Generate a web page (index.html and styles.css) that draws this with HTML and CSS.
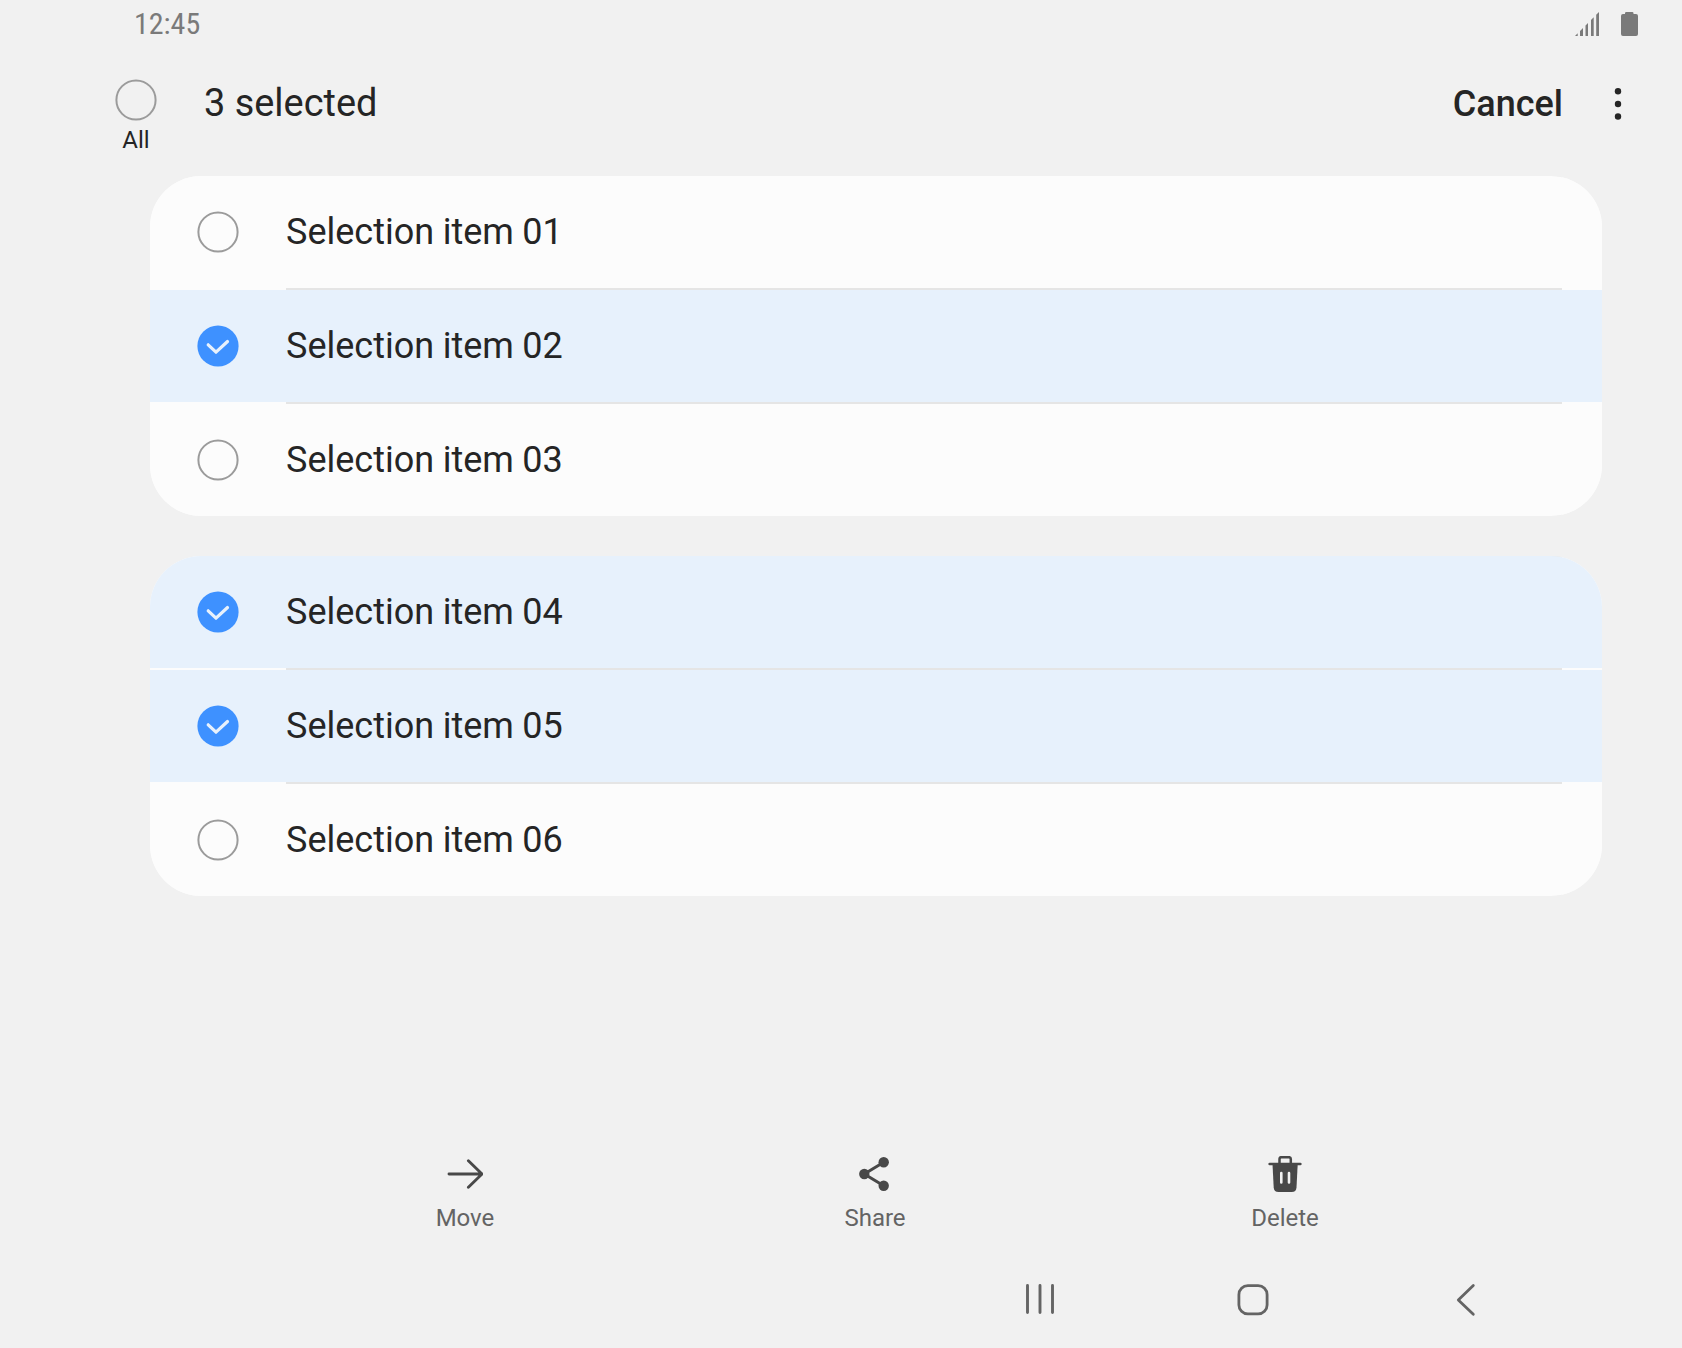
FILE: index.html
```html
<!DOCTYPE html>
<html lang="en">
<head>
<meta charset="utf-8">
<title>Selection</title>
<link rel="stylesheet" href="styles.css">
</head>
<body>
<svg class="defs" width="0" height="0" aria-hidden="true">
  <symbol id="off" viewBox="0 0 42 42"><circle cx="21" cy="21" r="19.600" fill="none" stroke="#9b9b9b" stroke-width="2"/></symbol>
  <symbol id="on" viewBox="0 0 42 42"><circle cx="21" cy="21" r="20.600" fill="#3e91ff"/><path d="M11.200 19.800l7.800 7.400L30.500 16.500" fill="none" stroke="#e7f1fc" stroke-width="3.200" stroke-linecap="round" stroke-linejoin="round"/></symbol>
</svg>
<div class="screen">
  <div class="status">
    <span class="clock">12:45</span>
    <svg class="signal" width="24" height="24" viewBox="0 0 24 24"><path d="M0 24L2.700 21.300V24zM5 24V19L8 16V24zM10.500 24V13.500L13 11V24zM16 24V8L18.700 5.300V24zM21.200 24V2.800L24 0V24z" fill="#7a7a7a"/></svg>
    <svg class="battery" width="17" height="24" viewBox="0 0 17 24"><path d="M4 2V1.200Q4 0 5.200 0H11.300Q12.500 0 12.500 1.200V2H15Q17 2 17 4V22Q17 24 15 24H2Q0 24 0 22V4Q0 2 2 2z" fill="#7a7a7a"/></svg>
  </div>
  <header class="header">
    <div class="all"><svg class="check" viewBox="0 0 42 42"><use href="#off"/></svg><span class="all-label">All</span></div>
    <h1 class="title">3 selected</h1>
    <span class="cancel">Cancel</span>
    <svg class="more" width="8" height="34" viewBox="0 0 8 34"><g fill="#252525"><circle cx="4" cy="4.300" r="3.200"/><circle cx="4" cy="17" r="3.200"/><circle cx="4" cy="29.500" r="3.200"/></g></svg>
  </header>
  <main class="lists">
    <ul class="card">
      <li class="row"><svg class="check"><use href="#off"/></svg><span class="name">Selection item 01</span></li>
      <li class="row selected"><svg class="check"><use href="#on"/></svg><span class="name">Selection item 02</span></li>
      <li class="row"><svg class="check"><use href="#off"/></svg><span class="name">Selection item 03</span></li>
    </ul>
    <ul class="card">
      <li class="row selected"><svg class="check"><use href="#on"/></svg><span class="name">Selection item 04</span></li>
      <li class="row selected"><svg class="check"><use href="#on"/></svg><span class="name">Selection item 05</span></li>
      <li class="row"><svg class="check"><use href="#off"/></svg><span class="name">Selection item 06</span></li>
    </ul>
  </main>
  <div class="actions">
    <div class="action">
      <svg width="36" height="36" viewBox="0 0 36 36"><path d="M2 18H35M21.400 4.700L35 18L21.400 31.200" fill="none" stroke="#484848" stroke-width="2.900" stroke-linecap="round" stroke-linejoin="round"/></svg>
      <span>Move</span>
    </div>
    <div class="action">
      <svg width="36" height="36" viewBox="0 0 36 36"><path d="M26.700 6.300L7.300 18L26.700 29.700" fill="none" stroke="#484848" stroke-width="3"/><g fill="#484848"><circle cx="26.700" cy="6.300" r="5.200"/><circle cx="7.300" cy="18" r="5.200"/><circle cx="26.700" cy="29.700" r="5.200"/></g></svg>
      <span>Share</span>
    </div>
    <div class="action">
      <svg width="36" height="36" viewBox="0 0 36 36"><path d="M12.500 7V3Q12.500 1.200 14.300 1.200H22Q23.800 1.200 23.800 3V7M2.600 8H33.400" fill="none" stroke="#484848" stroke-width="2.500" stroke-linecap="round"/><path d="M5.500 8H30.700L29.500 31.500Q29.200 36 24.700 36H11.500Q7 36 6.700 31.500z" fill="#484848"/><path d="M14.300 17V26.500M22 17V26.500" stroke="#f1f1f1" stroke-width="2.600" stroke-linecap="round"/></svg>
      <span>Delete</span>
    </div>
  </div>
  <nav class="nav">
    <svg width="36" height="36" viewBox="0 0 36 36"><path d="M5.500 4.500V31.500M18 4.500V31.500M30.500 4.500V31.500" stroke="#646464" stroke-width="2.900" stroke-linecap="round"/></svg>
    <svg width="36" height="36" viewBox="0 0 36 36"><rect x="3.900" y="4.700" width="28.200" height="28.200" rx="9" fill="none" stroke="#646464" stroke-width="2.800"/></svg>
    <svg width="36" height="36" viewBox="0 0 36 36"><path d="M25.300 4.500L10.300 18.900L25.300 33.300" fill="none" stroke="#646464" stroke-width="2.800" stroke-linecap="round" stroke-linejoin="round"/></svg>
  </nav>
</div>
</body>
</html>
```
FILE: styles.css
```css
* { box-sizing: border-box; }
body {
  margin: 0;
  background: #f1f1f1;
  color: #252525;
  font-family: Roboto, "Liberation Sans", sans-serif;
}
svg { display: block; flex: none; }
.defs { position: absolute; }
.screen {
  display: flex;
  flex-direction: column;
  width: 1682px;
  height: 1348px;
  overflow: hidden;
}
.status {
  display: flex;
  align-items: center;
  height: 48px;
  padding: 0 44px 0 134px;
}
.clock {
  flex: 1;
  color: #7a7a7a;
  font-family: "Roboto Condensed", Roboto, sans-serif;
  font-stretch: 75%;
  font-size: 30px;
  line-height: 48px;
}
.battery { margin-left: 22px; }
.header {
  display: flex;
  height: 128px;
  padding: 0 60px 0 105px;
}
.all {
  display: flex;
  flex-direction: column;
  align-items: center;
  width: 62px;
  padding-top: 31px;
}
.all-label {
  margin-top: 5px;
  font-size: 24px;
  line-height: 28px;
}
.check { width: 42px; height: 42px; }
.title, .cancel {
  margin: 31px 0 0;
  line-height: 48px;
}
.title {
  flex: 1;
  padding-left: 37px;
  font-size: 37.9px;
  font-weight: 400;
}
.cancel {
  margin-top: 32px;
  font-size: 36px;
  font-weight: 500;
}
.more { margin: 39px 0 0 51px; }
.lists {
  display: flex;
  flex-direction: column;
  gap: 40px;
  padding: 0 80px 0 150px;
}
.card {
  display: flex;
  flex-direction: column;
  gap: 2px;
  margin: 0;
  padding: 0;
  overflow: hidden;
  list-style: none;
  background: linear-gradient(#e5e5e5, #e5e5e5) 136px 0 / 1276px 100% no-repeat #fcfcfc;
  border-radius: 51px;
}
.row {
  display: flex;
  align-items: center;
  gap: 47px;
  height: 112px;
  padding-left: 47px;
  background: #fcfcfc;
}
.row.selected { background: #e7f1fc; }
.name {
  font-size: 36px;
  line-height: 48px;
  word-spacing: -0.4px;
}
.actions {
  display: grid;
  grid-template-columns: repeat(3, 410px);
  margin: 260px 0 0 260px;
}
.action {
  display: flex;
  flex-direction: column;
  align-items: center;
  gap: 12px;
  color: #646464;
  font-size: 24px;
  line-height: 28px;
}
.nav {
  display: grid;
  grid-template-columns: repeat(3, 213px);
  justify-items: center;
  margin: 49px 0 0 933.4px;
}
```
